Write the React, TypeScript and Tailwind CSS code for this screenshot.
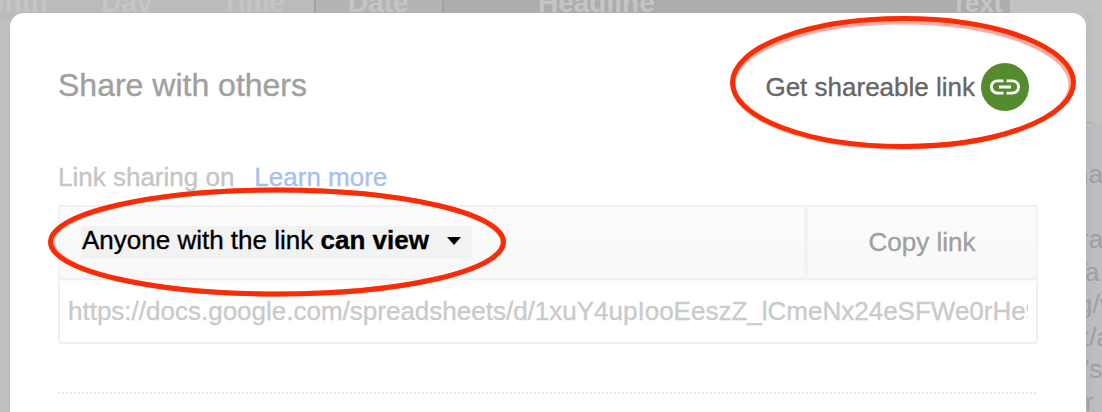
import React from "react";

const headers = [
  { label: "Month", box: "w-[75px] bg-[#bbbbbb]", text: "-ml-[36px] text-[28px]" },
  { label: "Day", box: "w-[120px] bg-[#bbbbbb]", text: "ml-[26px] text-[28px]" },
  { label: "Time", box: "w-[121px] border-r-2 border-[#a1a1a1] bg-[#bbbbbb]", text: "ml-[27px] text-[27px]" },
  { label: "Date", box: "w-[128px] border-r-2 border-[#a3a3a3] bg-[#b4b4b4]", text: "ml-[32px] text-[28px]" },
  { label: "Headline", box: "w-[507px] bg-[#adadad]", text: "ml-[94px] text-[28px]" },
  { label: "Text", box: "w-[59px] bg-[#adadad]", text: "ml-0 text-[26px]" },
];

const cells = [
  { text: "na", shift: "-ml-[12px]" },
  { text: "", shift: "" },
  { text: "ra", shift: "-ml-[6px]" },
  { text: "Ta", shift: "-ml-[14px]" },
  { text: "g/v", shift: "-ml-[8px]" },
  { text: "t/a", shift: "-ml-[4px]" },
  { text: "’s", shift: "-ml-[2px]" },
  { text: "r", shift: "-ml-[1px]" },
];

function SheetHeader() {
  return (
    <div className="flex h-[13px] overflow-hidden bg-[#c2c2c2] font-bold text-[#c5c5c5]">
      {headers.map((h) => (
        <div key={h.label} className={`h-[13px] shrink-0 overflow-hidden ${h.box}`}>
          <div className={`-mt-[14px] leading-[34px] whitespace-nowrap ${h.text}`}>{h.label}</div>
        </div>
      ))}
    </div>
  );
}

function LinkIcon() {
  return (
    <span className="flex size-12 shrink-0 items-center justify-center rounded-full bg-[#558b2f]">
      <svg width="36" height="36" viewBox="0 0 24 24" fill="#fff">
        <path d="M3.9 12c0-1.71 1.39-3.1 3.1-3.1h4V7H7c-2.76 0-5 2.24-5 5s2.24 5 5 5h4v-1.9H7c-1.71 0-3.1-1.39-3.1-3.1zM8 13h8v-2H8v2zm9-6h-4v1.9h4c1.71 0 3.1 1.39 3.1 3.1s-1.39 3.1-3.1 3.1h-4V17h4c2.76 0 5-2.24 5-5s-2.24-5-5-5z" />
      </svg>
    </span>
  );
}

function ShareDialog() {
  return (
    <main className="h-[399px] w-[1076px] shrink-0 rounded-t-[14px] bg-white px-12 [-webkit-text-stroke:0.35px]">
      <div className="flex h-[146px] items-start justify-between pt-[50px]">
        <h1 className="mt-[2px] text-[32px] leading-10 text-[#a0a0a0]">Share with others</h1>
        <button className="mr-[9px] flex items-center gap-[6px] text-[26px] leading-[48px] text-[#666]">
          <span>Get shareable link</span>
          <LinkIcon />
        </button>
      </div>

      <div className="flex h-[46px] gap-[20px] text-[26px] leading-9 text-[#c5c5c5]">
        <span>Link sharing on</span>
        <a className="text-[#a8bfef]">Learn more</a>
      </div>

      <section className="h-[139px] w-[980px] rounded-[4px] border-2 border-[#f0f0f0]">
        <div className="flex h-[73px] border-b-2 border-[#f0f0f0] bg-linear-to-b from-[#fcfcfc] to-[#f8f8f8] shadow-[0_2px_3px_#f8f8f8]">
          <div className="flex w-[748px] items-start border-r-4 border-[#f2f2f2] pt-[19px] pl-[21px]">
            <button className="flex h-[33px] w-[391px] items-center bg-[#f2f2f2] pb-1 pl-px text-[26px] leading-[27px] whitespace-nowrap text-black">
              <span>Anyone with the link <b>can view</b></span>
              <svg className="mt-px ml-[18px]" width="14" height="8" viewBox="0 0 14 8">
                <path d="M0 0h14L7 8z" />
              </svg>
            </button>
          </div>
          <button className="flex-1 text-[26px] leading-[68px] text-[#a0a0a0]">
            <span className="-mt-[2px] block">Copy link</span>
          </button>
        </div>
        <div className="mx-[8px] overflow-hidden text-[26px] leading-[62px] whitespace-nowrap text-[#cacaca]">
          https://docs.google.com/spreadsheets/d/1xuY4upIooEeszZ_lCmeNx24eSFWe0rHe9
        </div>
      </section>

      <div className="mt-12 h-[2px] w-[978px] bg-[repeating-linear-gradient(90deg,#e9e9e9_0px,#e9e9e9_2px,transparent_2px,transparent_4px)]" />
    </main>
  );
}

export default function App() {
  return (
    <div
      className="relative h-[412px] w-[1102px] overflow-hidden bg-[#bebfc1]"
      style={{ fontFamily: '"Liberation Sans", Arial, sans-serif' }}
    >
      <SheetHeader />
      <div className="flex h-[399px]">
        <div className="w-[10px] shrink-0">
          <div className="h-[7px] bg-[#bbbbbb]" />
        </div>
        <div className="bg-[linear-gradient(90deg,#bbbbbb_0,#bbbbbb_24px,#c2c2c2_24px)] bg-[length:100%_20px] bg-no-repeat">
          <ShareDialog />
        </div>
        <div className="w-4 shrink-0 overflow-hidden bg-linear-to-r from-[#b8babd] to-[#bdbfc2] text-[26px] leading-[32.5px] text-[#a0a0a0]">
          <div className="mb-[35px] flex h-[110px] items-end bg-linear-to-r from-[#bebebe] to-[#c3c3c3]">
            <div className="h-px w-[5px] bg-[#a5a5a5]" />
          </div>
          {cells.map((c, i) => (
            <div key={i} className={`h-[32.5px] whitespace-nowrap ${c.shift}`}>{c.text}</div>
          ))}
        </div>
      </div>

      <svg className="pointer-events-none absolute inset-0" width="1102" height="412" fill="none">
        <ellipse cx="902" cy="84.5" rx="169" ry="62.5" stroke="#ffaca0" strokeWidth="5" />
        <ellipse cx="903" cy="82.5" rx="170.5" ry="64" stroke="#fb2b06" strokeWidth="5" />
        <ellipse cx="277.5" cy="242" rx="225.5" ry="52" stroke="#ffaca0" strokeWidth="5" />
        <ellipse cx="277" cy="242" rx="226.5" ry="52" stroke="#fb2b06" strokeWidth="5" />
      </svg>
    </div>
  );
}
